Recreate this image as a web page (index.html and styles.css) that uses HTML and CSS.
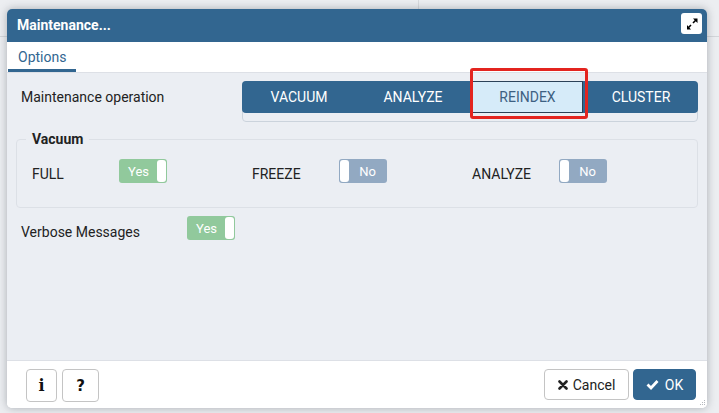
FILE: index.html
```html
<!DOCTYPE html>
<html lang="en">
<head>
<meta charset="utf-8">
<title>Maintenance</title>
<link rel="stylesheet" href="styles.css">
</head>
<body>
<div class="app">
  <div class="appbar"><div class="appbar-left"></div><div class="appbar-right"></div></div>
</div>
<div class="dialog">
  <div class="dlg-header">
    <span class="dlg-title">Maintenance...</span>
    <button class="expand-btn" aria-label="Maximize">
      <svg width="12" height="12" viewBox="0 0 12 12"><path d="M7 0.5H11.5V5Z M1 11.5V7L5 11.5Z" fill="#000"/><path d="M10.2 1.8L7 5M1.8 10.2L5 7" stroke="#000" stroke-width="1.6"/></svg>
    </button>
  </div>
  <div class="dlg-tabs"><div class="tab active">Options</div></div>
  <div class="dlg-body">
    <div class="form-row">
      <div class="row-label op-label">Maintenance operation</div>
      <div class="btn-group">
        <div class="btns">
          <button class="op-btn">VACUUM</button>
          <button class="op-btn">ANALYZE</button>
          <button class="op-btn active">REINDEX</button>
          <button class="op-btn">CLUSTER</button>
        </div>
      </div>
    </div>
    <fieldset class="vacuum-set">
      <legend>Vacuum</legend>
      <div class="toggle-grid">
        <div class="toggle-item"><span class="t-label">FULL</span><span class="toggle on"><span class="t-text">Yes</span><span class="t-handle"></span></span></div>
        <div class="toggle-item"><span class="t-label">FREEZE</span><span class="toggle off"><span class="t-handle"></span><span class="t-text">No</span></span></div>
        <div class="toggle-item"><span class="t-label">ANALYZE</span><span class="toggle off"><span class="t-handle"></span><span class="t-text">No</span></span></div>
      </div>
    </fieldset>
    <div class="verbose-row">
      <span class="verbose-label">Verbose Messages</span>
      <span class="toggle on"><span class="t-text">Yes</span><span class="t-handle"></span></span>
    </div>
  </div>
  <div class="dlg-footer">
    <div class="footer-left">
      <button class="icon-btn info">i</button>
      <button class="icon-btn help">?</button>
    </div>
    <div class="footer-right">
      <button class="btn cancel"><svg width="10" height="10" viewBox="0 0 10 10"><path d="M1.5 1.5L8.5 8.5M8.5 1.5L1.5 8.5" stroke="#222" stroke-width="2.6" stroke-linecap="round"/></svg>Cancel</button>
      <button class="btn ok"><svg width="13" height="11" viewBox="0 0 13 11"><path d="M1.5 5.5L5 9L11.5 2" stroke="#fff" stroke-width="2.8" fill="none"/></svg>OK</button>
    </div>
  </div>
  <div class="highlight"></div>
  <svg class="grip" width="6" height="6" viewBox="0 0 6 6"><g fill="#b5b8bd"><rect x="4" y="0" width="1" height="1"/><rect x="2" y="2" width="1" height="1"/><rect x="4" y="2" width="1" height="1"/><rect x="0" y="4" width="1" height="1"/><rect x="2" y="4" width="1" height="1"/><rect x="4" y="4" width="1" height="1"/></g></svg>
</div>
</body>
</html>
```
FILE: styles.css
```css
* { box-sizing: border-box; }
html, body { margin: 0; padding: 0; }
body {
  width: 719px;
  height: 413px;
  background: #eceef1;
  font-family: "Roboto", "Liberation Sans", sans-serif;
  font-size: 14px;
  color: #222;
  position: relative;
  overflow: hidden;
}
.app { height: 100%; }
.appbar { display: flex; height: 37px; border-bottom: 1px solid #d3d6da; }
.appbar-left { width: 419px; border-right: 1px solid #d8dadd; height: 10px; }
.appbar-right { flex: 1; }

.dialog {
  position: absolute;
  left: 7px;
  top: 9px;
  width: 700px;
  height: 399px;
  display: flex;
  flex-direction: column;
  border-radius: 5px;
  overflow: hidden;
  background: #fff;
  box-shadow: 0 0 9px rgba(40, 50, 60, 0.35);
}
.dlg-header {
  height: 33px;
  flex: none;
  background: #326690;
  display: flex;
  justify-content: space-between;
  align-items: flex-start;
  padding: 0 5px 0 10px;
}
.dlg-title {
  color: #fff;
  font-weight: bold;
  font-size: 14px;
  line-height: 33px;
}
.expand-btn {
  margin-top: 4px;
  width: 21px;
  height: 21px;
  border: none;
  border-radius: 3px;
  background: #fff;
  padding: 0;
  display: flex;
  align-items: center;
  justify-content: center;
}
.dlg-tabs {
  height: 31px;
  flex: none;
  background: #fff;
  border-bottom: 1px solid #dde0e6;
  display: flex;
  padding-left: 1px;
}
.tab {
  height: 30px;
  width: 68px;
  padding: 2px 10px 0;
  display: flex;
  align-items: center;
  color: #326690;
  font-size: 14px;
  border-bottom: 3px solid #326690;
}
.dlg-body {
  flex: 1;
  background: #ebeef3;
  padding: 8px 9px 0 9px;
}
.form-row { display: flex; align-items: flex-start; }
.op-label {
  width: 226px;
  padding-left: 5px;
  line-height: 33px;
}
.btn-group {
  width: 456px;
  height: 41px;
  border: 1px solid #cbd3dc;
  border-radius: 4px;
}
.btns {
  display: flex;
  margin: -1px -1px 0 -1px;
  height: 32px;
}
.op-btn {
  width: 114px;
  height: 32px;
  border: none;
  background: #326690;
  color: #fff;
  font-family: "Roboto", "Liberation Sans", sans-serif;
  font-size: 14px;
  padding: 0;
}
.op-btn:first-child { border-radius: 4px 0 0 4px; }
.op-btn:last-child { border-radius: 0 4px 4px 0; }
.op-btn.active {
  background: #d6ebf9;
  color: #3d6082;
  box-shadow: inset 0 0 0 1px #2b4158;
  border-left: 2px solid #326690;
  border-right: 1px solid #326690;
}
.vacuum-set {
  margin: 7px 0 0 0;
  padding: 0 15px 24px 9px;
  border: 1px solid #dce0e6;
  border-radius: 4px;
  min-width: 0;
}
.vacuum-set legend {
  padding: 0 6px;
  font-weight: bold;
  font-size: 14px;
  line-height: 20px;
}
.toggle-grid {
  display: grid;
  grid-template-columns: 220px 220px auto;
  padding: 10px 0 0 6px;
}
.toggle-item { display: flex; align-items: center; }
.t-label { width: 87px; padding-top: 6px; }
.toggle {
  width: 48px;
  height: 24px;
  border-radius: 3px;
  display: flex;
  align-items: center;
  padding: 1px;
  color: #fff;
  font-size: 13px;
}
.toggle.on { background: #91c99c; }
.toggle.off { background: #92a9c2; }
.t-text { flex: 1; text-align: center; }
.t-handle {
  width: 9px;
  height: 22px;
  background: #fff;
  border-radius: 3px;
}
.verbose-row {
  display: flex;
  align-items: center;
  margin-top: 8px;
}
.verbose-label { width: 171px; padding-left: 5px; padding-top: 7px; }
.dlg-footer {
  height: 48px;
  flex: none;
  background: #fff;
  border-top: 1px solid #dde0e6;
  padding: 8px 11px 0 19px;
  display: flex;
  justify-content: space-between;
  align-items: flex-start;
}
.footer-left, .footer-right { display: flex; gap: 5px; }
.footer-right { gap: 4px; }
.icon-btn {
  height: 33px;
  border: 1px solid #c4c4c4;
  border-radius: 4px;
  background: #fff;
  font-family: "DejaVu Serif", serif;
  font-weight: bold;
  font-size: 16px;
  color: #111;
  padding: 0;
}
.icon-btn.info { width: 31px; }
.icon-btn.help { width: 37px; font-family: "DejaVu Sans", sans-serif; font-size: 15px; }
.btn {
  height: 31px;
  border-radius: 4px;
  font-family: "Roboto", "Liberation Sans", sans-serif;
  font-size: 14px;
  display: flex;
  align-items: center;
  justify-content: center;
  gap: 5px;
  padding: 0;
}
.btn.cancel { width: 85px; background: #fff; border: 1px solid #c4c4c4; color: #222; }
.btn.ok { width: 63px; background: #326690; border: 1px solid #326690; color: #fff; gap: 6px; }
.highlight {
  position: absolute;
  left: 463px;
  top: 59px;
  width: 118px;
  height: 51px;
  border: 3px solid #e3241f;
  border-radius: 3px;
}
.grip { position: absolute; right: 1px; bottom: 2px; }
```
